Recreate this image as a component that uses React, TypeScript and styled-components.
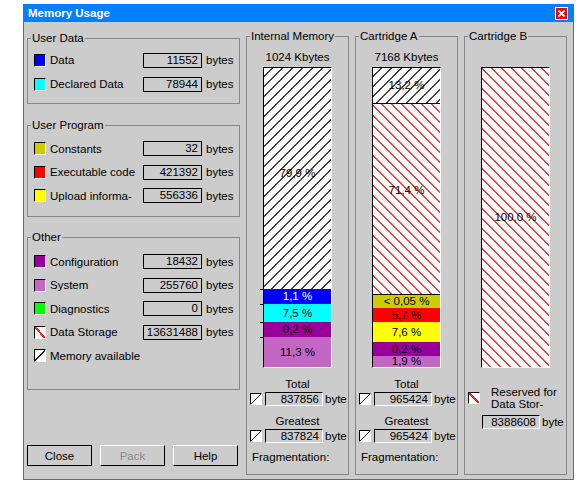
import React from 'react';
import styled, { createGlobalStyle } from 'styled-components';

type Segment = {
    h: number,
    fill: string,
    label: string,
    light?: boolean,
    divider?: boolean,
    lift?: number
};

const hatchBlack = 'repeating-linear-gradient(135deg, #fff 0px, #fff 5.4px, #444 5.4px, #444 6.7px, #fff 6.7px, #fff 7.07px)';
const hatchRed = 'repeating-linear-gradient(45deg, #fff 0px, #fff 5.2px, #ff3a3a 5.2px, #ff3a3a 6.6px, #fff 6.6px, #fff 7.07px)';
const lineBlack = 'linear-gradient(to bottom right, #fff calc(50% - 0.7px), #222 calc(50% - 0.7px), #222 calc(50% + 0.7px), #fff calc(50% + 0.7px))';
const lineRed = 'linear-gradient(to top right, #fff calc(50% - 1px), #ff2020 calc(50% - 1px), #ff2020 calc(50% + 1px), #fff calc(50% + 1px))';

const PURPLE = '#990099';
const ORCHID = '#c467c4';

const GlobalStyle = createGlobalStyle`
    html, body {
        margin: 0;
        padding: 0;
        background: #fff;
    }
    body {
        font-family: "Liberation Sans", Arial, sans-serif;
        font-size: 11.5px;
        color: #000;
    }
`;

const Page = styled.div`
    padding: 4px 0 0 23px;
`;

const Window = styled.div`
    width: 551px;
    height: 476px;
    box-sizing: border-box;
    background: #cccccc;
    border: 1px solid #0a7ff2;
    border-top: 0;
    display: flex;
    flex-direction: column;
`;

const TitleBar = styled.div`
    height: 18px;
    flex: none;
    background: #0080ff;
    color: #fff;
    font-weight: bold;
    display: flex;
    align-items: center;
    justify-content: space-between;
    padding: 0 5px 0 4px;
`;

const CloseBox = styled.span`
    display: flex;
    width: 13px;
    height: 13px;
`;

const Body = styled.div`
    flex: 1;
    display: flex;
    gap: 6px;
    padding: 0 5px 0 3px;
`;

const LeftPane = styled.div`
    width: 213px;
    display: flex;
    flex-direction: column;
`;

const Group = styled.div<{ $mt: number, $height: number, $pt: number }>`
    position: relative;
    box-sizing: border-box;
    border: 1px solid #878787;
    margin-top: ${p => p.$mt}px;
    height: ${p => p.$height}px;
    padding-top: ${p => p.$pt}px;
`;

const Legend = styled.span`
    position: absolute;
    top: -8px;
    left: 3px;
    padding: 0 1px;
    line-height: 14px;
    background: #cccccc;
    white-space: nowrap;
`;

const Row = styled.div<{ $h: number }>`
    height: ${p => p.$h}px;
    display: flex;
    align-items: center;
    padding-left: 6px;
`;

const Swatch = styled.span<{ $fill: string }>`
    width: 12px;
    height: 13px;
    flex: none;
    box-sizing: border-box;
    border: 1px solid;
    border-color: #000 #fff #fff #000;
    background: ${p => p.$fill};
`;

const Label = styled.span`
    width: 93px;
    margin-left: 4px;
    white-space: nowrap;
    overflow: hidden;
`;

const ValueBox = styled.span`
    width: 59px;
    height: 15px;
    box-sizing: border-box;
    border: 1px solid #000;
    text-align: right;
    padding-right: 3px;
    line-height: 13px;
`;

const Unit = styled.span<{ $gap?: number }>`
    margin-left: ${p => p.$gap ?? 4}px;
    white-space: nowrap;
`;

const Buttons = styled.div`
    margin-top: auto;
    margin-bottom: 13px;
    display: flex;
    gap: 8px;
`;

const Button = styled.button<{ $default?: boolean }>`
    width: 65px;
    height: 21px;
    padding: 0;
    font: inherit;
    background: #cccccc;
    color: ${p => p.disabled ? '#8a8a8a' : '#000'};
    border: 1px solid;
    border-color: ${p => p.$default ? '#000' : '#fff #000 #000 #fff'};
`;

const Column = styled.div`
    position: relative;
    width: 103px;
    height: 439px;
    box-sizing: border-box;
    margin-top: 14px;
    border: 1px solid #878787;
    display: flex;
    flex-direction: column;
`;

const Caption = styled.div<{ $mt: number }>`
    margin-top: ${p => p.$mt}px;
    min-height: 14px;
    line-height: 14px;
    text-align: center;
`;

const Bar = styled.div`
    width: 69px;
    height: 301px;
    box-sizing: border-box;
    margin: 3px auto 0;
    border: 1px solid;
    border-color: #000 #fff #fff #000;
    background: #fff;
    display: flex;
    flex-direction: column;
`;

const Part = styled.div<{ $h: number, $fill: string, $light?: boolean, $divider?: boolean, $lift?: number, $tick?: boolean }>`
    position: relative;
    flex: none;
    height: ${p => p.$h}px;
    box-sizing: border-box;
    background: ${p => p.$fill};
    color: ${p => p.$light ? '#fff' : '#000'};
    border-top: ${p => p.$divider ? '1px solid #000' : '0'};
    padding-bottom: ${p => p.$lift ?? 0}px;
    display: flex;
    align-items: center;
    justify-content: center;
    line-height: 13px;
    white-space: nowrap;
    &::before {
        content: '';
        display: ${p => p.$tick ? 'block' : 'none'};
        position: absolute;
        top: 0;
        left: -4px;
        width: 3px;
        height: 1px;
        background: #000;
    }
`;

const MiniRow = styled.div<{ $pl?: number, $mt?: number }>`
    height: 14px;
    margin-top: ${p => p.$mt ?? 1}px;
    padding-left: ${p => p.$pl ?? 3}px;
    display: flex;
    align-items: center;
    overflow: hidden;
`;

const MiniSwatch = styled.span<{ $fill: string }>`
    width: 12px;
    height: 12px;
    flex: none;
    box-sizing: border-box;
    border: 1px solid;
    border-color: #000 #fff #fff #000;
    background: ${p => p.$fill};
`;

const MiniBox = styled.span<{ $ml?: number }>`
    width: 58px;
    height: 14px;
    flex: none;
    margin-left: ${p => p.$ml ?? 3}px;
    box-sizing: border-box;
    border: 1px solid;
    border-color: #000 #fff #fff #000;
    text-align: right;
    padding-right: 3px;
    line-height: 12px;
`;

const Note = styled.div`
    margin-top: 7px;
    padding-left: 5px;
    line-height: 14px;
    white-space: nowrap;
`;

const Reserve = styled.div`
    margin-top: 18px;
    padding-left: 3px;
    display: flex;
    align-items: flex-start;
`;

const ReserveText = styled.div`
    margin-left: 11px;
    line-height: 12px;
`;

const userData = [
    { fill: '#0000ff', label: 'Data', value: '11552' },
    { fill: '#00ffff', label: 'Declared Data', value: '78944' }
];

const userProgram = [
    { fill: '#cccc00', label: 'Constants', value: '32' },
    { fill: '#ff0000', label: 'Executable code', value: '421392' },
    { fill: '#ffff00', label: 'Upload informa-', value: '556336' }
];

const other = [
    { fill: PURPLE, label: 'Configuration', value: '18432' },
    { fill: ORCHID, label: 'System', value: '255760' },
    { fill: '#00ff00', label: 'Diagnostics', value: '0' },
    { fill: lineRed, label: 'Data Storage', value: '13631488' }
];

const internal: Segment[] = [
    { h: 221, fill: hatchBlack, label: '79,9 %', lift: 11 },
    { h: 15, fill: '#0000ff', label: '1,1 %', light: true },
    { h: 18, fill: '#00ffff', label: '7,5 %' },
    { h: 15, fill: PURPLE, label: '0,2 %' },
    { h: 30, fill: ORCHID, label: '11,3 %' }
];

const cartA: Segment[] = [
    { h: 35, fill: hatchBlack, label: '13,2 %' },
    { h: 191, fill: hatchRed, label: '71,4 %', divider: true, lift: 18 },
    { h: 14, fill: '#cccc00', label: '< 0,05 %', divider: true },
    { h: 14, fill: '#ff0000', label: '5,7 %' },
    { h: 20, fill: '#ffff00', label: '7,6 %' },
    { h: 14, fill: PURPLE, label: '0,2 %' },
    { h: 11, fill: ORCHID, label: '1,9 %' }
];

const cartB: Segment[] = [
    { h: 299, fill: hatchRed, label: '100,0 %' }
];

function CloseIcon() {
    return (
        <CloseBox>
            <svg width='13' height='13' viewBox='0 0 13 13'>
                <rect x='0.5' y='0.5' width='12' height='12' fill='#ff0000' stroke='#fff' />
                <path d='M3.5 3.5 L9.5 9.5 M9.5 3.5 L3.5 9.5' stroke='#fff' strokeWidth='1.8' />
            </svg>
        </CloseBox>
    );
}

function MemoryBar({ parts, ticks }: { parts: Segment[], ticks?: boolean }) {
    return (
        <Bar>
            {
                parts.map((s, i) => (
                    <Part key={i} $h={s.h} $fill={s.fill} $light={s.light} $divider={s.divider}
                        $lift={s.lift} $tick={ticks && i > 0}>
                        {s.label}
                    </Part>
                ))
            }
        </Bar>
    );
}

function Stats({ total, greatest }: { total: string, greatest: string }) {
    return (
        <>
            <Caption $mt={9}>Total</Caption>
            <MiniRow>
                <MiniSwatch $fill={lineBlack} />
                <MiniBox>{total}</MiniBox>
                <Unit $gap={2}>byte</Unit>
            </MiniRow>
            <Caption $mt={8}>Greatest</Caption>
            <MiniRow>
                <MiniSwatch $fill={lineBlack} />
                <MiniBox>{greatest}</MiniBox>
                <Unit $gap={2}>byte</Unit>
            </MiniRow>
            <Note>Fragmentation:</Note>
        </>
    );
}

function App() {
    return (
        <Page>
            <GlobalStyle />
            <Window>
                <TitleBar>
                    <span>Memory Usage</span>
                    <CloseIcon />
                </TitleBar>
                <Body>
                    <LeftPane>
                        <Group $mt={16} $height={66} $pt={9}>
                            <Legend>User Data</Legend>
                            {
                                userData.map(item => (
                                    <Row key={item.label} $h={24}>
                                        <Swatch $fill={item.fill} />
                                        <Label>{item.label}</Label>
                                        <ValueBox>{item.value}</ValueBox>
                                        <Unit>bytes</Unit>
                                    </Row>
                                ))
                            }
                        </Group>
                        <Group $mt={21} $height={92} $pt={11}>
                            <Legend>User Program</Legend>
                            {
                                userProgram.map(item => (
                                    <Row key={item.label} $h={23.5}>
                                        <Swatch $fill={item.fill} />
                                        <Label>{item.label}</Label>
                                        <ValueBox>{item.value}</ValueBox>
                                        <Unit>bytes</Unit>
                                    </Row>
                                ))
                            }
                        </Group>
                        <Group $mt={20} $height={153} $pt={12}>
                            <Legend>Other</Legend>
                            {
                                other.map(item => (
                                    <Row key={item.label} $h={23.5}>
                                        <Swatch $fill={item.fill} />
                                        <Label>{item.label}</Label>
                                        <ValueBox>{item.value}</ValueBox>
                                        <Unit>bytes</Unit>
                                    </Row>
                                ))
                            }
                            <Row $h={23.5}>
                                <Swatch $fill={lineBlack} />
                                <Label>Memory available</Label>
                            </Row>
                        </Group>
                        <Buttons>
                            <Button $default>Close</Button>
                            <Button disabled>Pack</Button>
                            <Button>Help</Button>
                        </Buttons>
                    </LeftPane>

                    <Column>
                        <Legend>Internal Memory</Legend>
                        <Caption $mt={13}>1024 Kbytes</Caption>
                        <MemoryBar parts={internal} ticks />
                        <Stats total='837856' greatest='837824' />
                    </Column>

                    <Column>
                        <Legend>Cartridge A</Legend>
                        <Caption $mt={13}>7168 Kbytes</Caption>
                        <MemoryBar parts={cartA} />
                        <Stats total='965424' greatest='965424' />
                    </Column>

                    <Column>
                        <Legend>Cartridge B</Legend>
                        <Caption $mt={13} />
                        <MemoryBar parts={cartB} />
                        <Reserve>
                            <MiniSwatch $fill={lineRed} style={{ marginTop: 6 }} />
                            <ReserveText>Reserved for<br />Data Stor-</ReserveText>
                        </Reserve>
                        <MiniRow $pl={17} $mt={5}>
                            <MiniBox $ml={0}>8388608</MiniBox>
                            <Unit $gap={2}>byte</Unit>
                        </MiniRow>
                    </Column>
                </Body>
            </Window>
        </Page>
    );
}

export default App;
